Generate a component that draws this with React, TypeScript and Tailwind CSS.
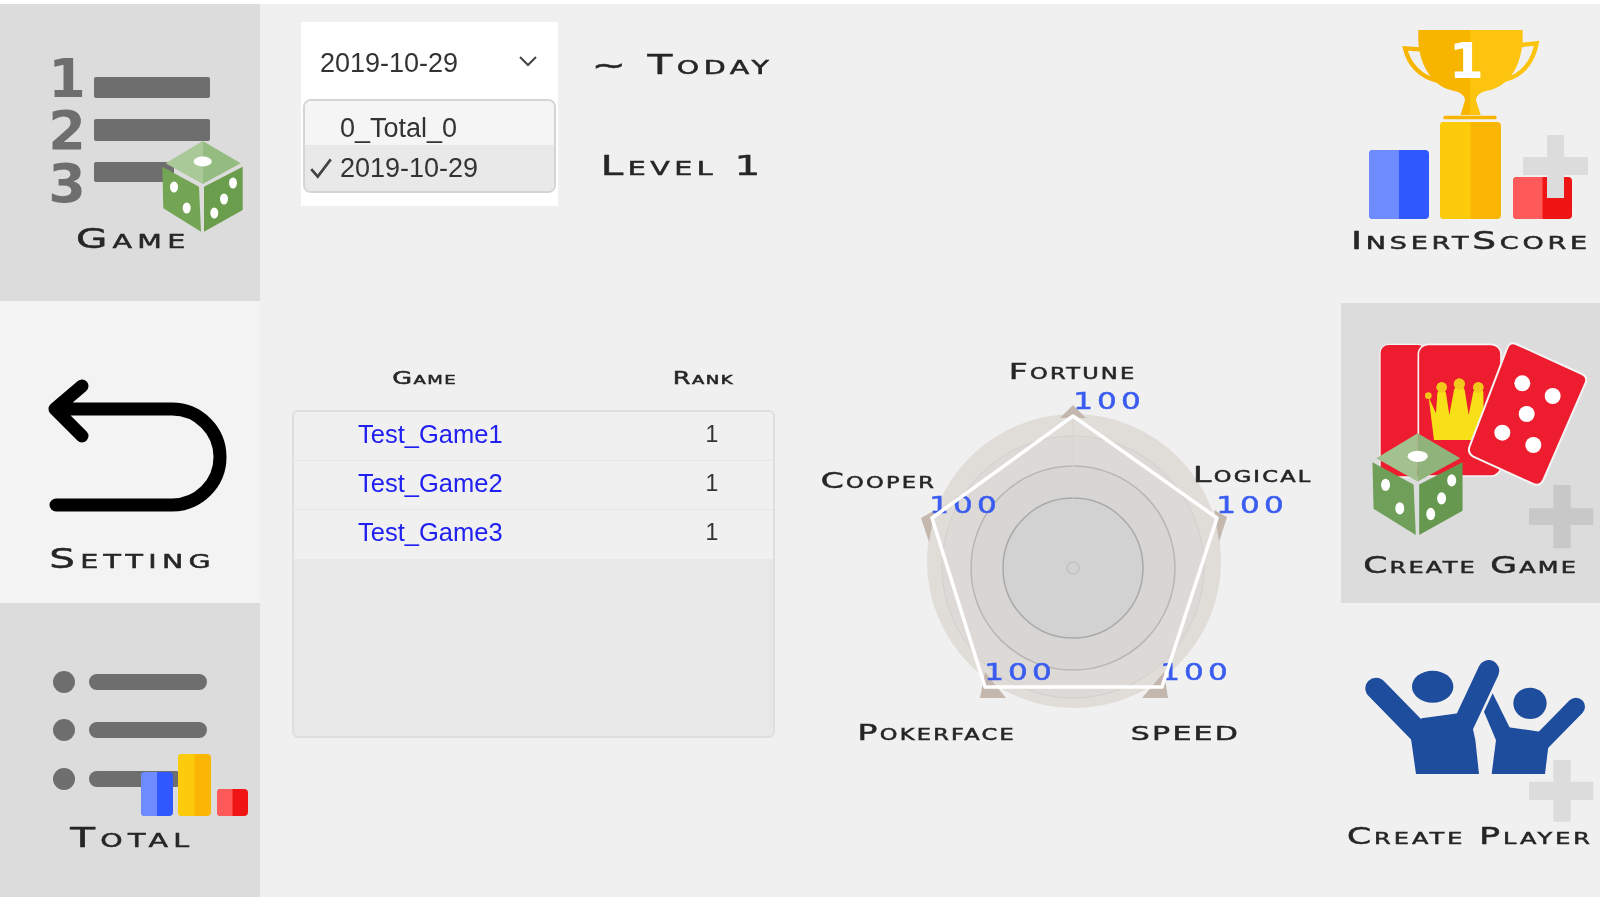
import type { ReactNode } from 'react';

const games = ['Test_Game1', 'Test_Game2', 'Test_Game3'];

// Wide small-caps caption used all over the page
function Caption({ children, className = '' }: { children: ReactNode; className?: string }) {
  return (
    <span
      className={`inline-block whitespace-pre origin-center scale-x-150 font-['DejaVu_Sans',sans-serif] [font-variant-caps:small-caps] leading-none text-[#262626] [-webkit-text-stroke:0.5px_#262626] ${className}`}
    >
      {children}
    </span>
  );
}

function Dice({ x, y, w, h, left = '#74a555', right = '#6a9e4d', topA = '#a9c998', topB = '#95bc80' }: {
  x: number; y: number; w: number; h: number; left?: string; right?: string; topA?: string; topB?: string;
}) {
  return (
    <svg x={x} y={y} width={w} height={h} viewBox="0 0 81 91">
      <path d="M40.7 0 3.7 22.3 40.7 43Z" fill={topA} />
      <path d="M40.7 0 78.7 22.3 40.7 43Z" fill={topB} />
      <path d="M.3 25.7 37 45.7 39 90.7 1.3 67.3Z" fill={left} />
      <path d="M42 45.7 80.7 25.7V69L42 90.7Z" fill={right} />
      <ellipse cx="40.7" cy="20.5" rx="9" ry="5" fill="#fff" />
      <ellipse cx="12" cy="46" rx="4" ry="5.5" fill="#fff" />
      <ellipse cx="24.7" cy="67" rx="4" ry="5.5" fill="#fff" />
      <ellipse cx="71" cy="42" rx="4" ry="5.5" fill="#fff" />
      <ellipse cx="62" cy="58" rx="4" ry="5.5" fill="#fff" />
      <ellipse cx="52.3" cy="72" rx="4" ry="5.5" fill="#fff" />
    </svg>
  );
}

function Bar({ x, y, w, h, a, b }: { x: number; y: number; w: number; h: number; a: string; b: string }) {
  return (
    <g>
      <rect x={x} y={y} width={w} height={h} rx="4" fill={b} />
      <path d={`M${x + 4} ${y}H${x + w / 2}V${y + h}H${x + 4}a4 4 0 0 1-4-4V${y + 4}a4 4 0 0 1 4-4Z`} fill={a} />
    </g>
  );
}

function Plus({ x, y, color }: { x: number; y: number; color: string }) {
  return (
    <path
      d={`M${x + 24} ${y}h17v22h24v18h-24v23h-17v-23h-24v-18h24Z`}
      fill={color}
    />
  );
}

function GameIcon() {
  return (
    <svg viewBox="0 4 260 221" className="block w-[260px] h-[221px] overflow-visible">
      <g fill="#6e6e6e" fontFamily="DejaVu Sans" fontWeight="700" fontSize="54" textAnchor="middle">
        <text x="67" y="97">1</text>
        <text x="67" y="149">2</text>
        <text x="67" y="202">3</text>
      </g>
      <rect x="94" y="77" width="116" height="21" rx="2" fill="#6e6e6e" />
      <rect x="94" y="119" width="116" height="22" rx="2" fill="#6e6e6e" />
      <rect x="94" y="162" width="80" height="20" rx="2" fill="#6e6e6e" />
      <Dice x={162} y={141} w={81} h={91} />
    </svg>
  );
}

function BackIcon() {
  return (
    <svg viewBox="0 301 260 244" className="block w-[260px] h-[244px]">
      <path
        d="M82 386 55 409 82 436M55 409H172A48 48 0 0 1 172 505H56"
        fill="none"
        stroke="#000"
        strokeWidth="13"
        strokeLinecap="round"
        strokeLinejoin="round"
      />
    </svg>
  );
}

function TotalIcon() {
  return (
    <svg viewBox="0 603 260 221" className="block w-[260px] h-[221px] overflow-visible">
      {[682, 730, 779].map((cy) => (
        <circle key={cy} cx="64" cy={cy} r="11" fill="#6e6e6e" />
      ))}
      <rect x="89" y="674" width="118" height="16" rx="8" fill="#6e6e6e" />
      <rect x="89" y="722" width="118" height="16" rx="8" fill="#6e6e6e" />
      <rect x="89" y="771" width="95" height="16" rx="8" fill="#6e6e6e" />
      <Bar x={141} y={772} w={32} h={44} a="#6e8cff" b="#2f58ff" />
      <Bar x={178} y={754} w={33} h={62} a="#fccb0c" b="#fab505" />
      <Bar x={217} y={789} w={31} h={27} a="#ff5a5a" b="#f01515" />
    </svg>
  );
}

function ScoreIcon() {
  return (
    <svg viewBox="1341 4 259 224" className="block w-[259px] h-[224px]">
      <g transform="translate(1330 0) scale(.33333)">
        <path d="M270 148 225 145C235 190 270 235 330 243" fill="none" stroke="#f7b500" strokeWidth="13" />
        <path d="M572 135 620 130C610 180 580 230 520 240" fill="none" stroke="#fcc40e" strokeWidth="13" />
        <path d="M265 90H420V345H392L405 300Q405 280 370 272C310 260 270 200 265 125Z" fill="#f7b500" />
        <path d="M578 90H420V345H452L438 300Q438 280 470 272C520 265 570 220 578 125Z" fill="#fcc40e" />
        <rect x="340" y="347" width="160" height="11" rx="5" fill="#f7b500" />
        <text x="409" y="235" fill="#fff" fontFamily="DejaVu Sans" fontWeight="700" fontSize="150" textAnchor="middle">1</text>
      </g>
      <Bar x={1369} y={150} w={60} h={69} a="#6e8cff" b="#2f58ff" />
      <Bar x={1440} y={122} w={61} h={97} a="#fccb0c" b="#fab505" />
      <Bar x={1513} y={177} w={59} h={42} a="#ff5a5a" b="#f01515" />
      <Plus x={1523} y={135} color="#dcdcdc" />
    </svg>
  );
}

function CreateGameIcon() {
  return (
    <svg viewBox="1341 303 259 251" className="block w-[259px] h-[251px]">
      <g transform="translate(1330 300) scale(.33333)">
        <rect x="150" y="133" width="140" height="398" rx="26" fill="#ed1c2e" stroke="#f4f4f4" strokeWidth="4" />
        <rect x="265" y="133" width="248" height="395" rx="30" fill="#ed1c2e" stroke="#f4f4f4" strokeWidth="5" />
        <path d="M312 420 296 292 318 340 322 280Q335 250 348 280L358 345 372 270Q388 235 404 270L416 345 430 275Q445 250 460 275L462 420Z" fill="#f7e017" />
        <circle cx="335" cy="262" r="16" fill="#f2c81c" />
        <circle cx="388" cy="252" r="17" fill="#f2c81c" />
        <circle cx="445" cy="262" r="16" fill="#f2c81c" />
        <circle cx="295" cy="287" r="10" fill="#f2c81c" />
        <path d="M558 132 756 222Q775 232 766 250L640 540Q630 560 610 552L430 470Q410 458 420 436L530 148Q538 124 558 132Z" fill="#ed1c2e" stroke="#f4f4f4" strokeWidth="6" />
        {[[577, 250], [668, 288], [590, 342], [517, 398], [610, 435]].map(([cx, cy]) => (
          <circle key={cx} cx={cx} cy={cy} r="24" fill="#fff" />
        ))}
        <Dice x={125} y={400} w={275} h={306} left="#6f9f59" right="#66984f" topA="#a3c08f" topB="#90b27b" />
        <path d="M670 555h52v70h68v50h-68v70h-52v-70h-73v-50h73Z" fill="#c8c8c8" />
      </g>
    </svg>
  );
}

function CreatePlayerIcon() {
  return (
    <svg viewBox="1341 603 259 222" className="block w-[259px] h-[222px]">
      <g transform="translate(1330 600) scale(.33333)">
        <g fill="#1e4d9e">
          <ellipse cx="308" cy="260" rx="62" ry="48" />
          <path d="M240 400 275 355 385 340 425 370 436 420 447 522H258L245 430Z" />
          <ellipse cx="600" cy="310" rx="50" ry="47" />
          <path d="M525 380 630 395 655 440 645 522H485L498 420Z" />
          <path d="M488 280 540 385 500 425 462 335Z" />
        </g>
        <g fill="none" stroke="#1e4d9e" strokeWidth="64" strokeLinecap="round">
          <path d="M138 265 275 405" />
          <path d="M476 212 395 385" />
        </g>
        <path d="M738 320 635 425" fill="none" stroke="#1e4d9e" strokeWidth="54" strokeLinecap="round" />
        <path d="M670 480h52v65h68v55h-68v65h-52v-65h-73v-55h73Z" fill="#dcdcdc" />
      </g>
    </svg>
  );
}

function Radar() {
  const labels = [
    { text: '100', x: 1109, y: 409 },
    { text: '100', x: 1252, y: 513 },
    { text: '100', x: 965, y: 513 },
    { text: '100', x: 1020, y: 680 },
    { text: '100', x: 1196, y: 680 },
  ];
  return (
    <div className="relative w-[505px] h-[400px] ml-[40px] shrink-0">
      <svg viewBox="815 360 505 400" className="absolute inset-0 w-full h-full">
        <circle cx="1074" cy="561" r="147" fill="#e0dcd8" />
        <circle cx="1073" cy="567" r="131" fill="#dcd9d6" stroke="#d2cfcc" />
        <circle cx="1073" cy="568" r="102" fill="#d8d6d4" stroke="#b8b6b3" strokeWidth="1.5" />
        <circle cx="1073" cy="568" r="70" fill="#d2d2d2" stroke="#aaa9a7" strokeWidth="1.5" />
        <circle cx="1073" cy="568" r="6" fill="none" stroke="#c2c2c2" strokeWidth="1.5" />
        <path d="M1073 416V498" stroke="#d6d4d1" />
        <g fill="#c4b8ae">
          <path d="M1073 405 1060 418H1086Z" />
          <path d="M1227 517 1214 510 1219 542Z" />
          <path d="M921 518 935 510 929 542Z" />
          <path d="M1168 698 1142 698 1164 672Z" />
          <path d="M980 698 1006 698 985 672Z" />
        </g>
        <g fill="#3a5cf0" stroke="#3a5cf0" strokeWidth=".5" fontFamily="DejaVu Sans" fontSize="23" textAnchor="middle" letterSpacing="3">
          {labels.map((l) => (
            <text key={l.x} transform={`translate(${l.x} ${l.y}) scale(1.35 1)`}>{l.text}</text>
          ))}
        </g>
        <path d="M1073 416 1217 518 1162 687H985L932 518Z" fill="none" stroke="#fff" strokeWidth="3.5" strokeLinejoin="round" />
      </svg>
      <Caption className="absolute left-[215px] top-[1px] text-[22px] tracking-[1.5px]">Fortune</Caption>
      <Caption className="absolute left-[398px] top-[104px] text-[22px] tracking-[1.5px]">Logical</Caption>
      <Caption className="absolute left-[25px] top-[110px] text-[22px] tracking-[1.5px]">Cooper</Caption>
      <Caption className="absolute left-[69px] top-[362px] text-[22px] tracking-[1.5px]">Pokerface</Caption>
      <Caption className="absolute left-[334px] top-[363px] text-[20px] tracking-[1.5px] uppercase">Speed</Caption>
    </div>
  );
}

function GameTable() {
  return (
    <div className="w-[483px] shrink-0 pt-[6px]">
      <div className="flex h-[24px] items-center">
        <div className="w-[266px] shrink-0 text-center">
          <Caption className="text-[17px] tracking-[1px]">Game</Caption>
        </div>
        <div className="w-[290px] shrink-0 text-center">
          <Caption className="text-[17px] tracking-[1px]">Rank</Caption>
        </div>
      </div>
      <div className="mt-[20px] h-[328px] overflow-hidden rounded-md border-2 border-[#dedede] bg-[#e8e8e8]">
        {games.map((name) => (
          <div key={name} className="flex h-[49px] items-center border-b border-[#e6e6e6] bg-[#f0f0f0] pb-[4px] pl-[64px] last:border-b-0">
            <span className="w-[330px] font-['Liberation_Sans',sans-serif] text-[25.5px] text-[#2020f0]">{name}</span>
            <span className="w-[48px] text-center font-['Liberation_Sans',sans-serif] text-[23px] text-[#333]">1</span>
          </div>
        ))}
      </div>
    </div>
  );
}

function DatePicker() {
  return (
    <div className="flex h-[184px] w-[257px] flex-col bg-white font-['Liberation_Sans',sans-serif] text-[27px] text-[#333]">
      <div className="flex h-[77px] shrink-0 items-center justify-between pl-[19px] pr-[18px]">
        <span className="pt-[5px]">2019-10-29</span>
        <svg viewBox="0 0 24 24" className="h-[24px] w-[24px]" fill="none" stroke="#444" strokeWidth="2">
          <path d="M4 8l8 8 8-8" />
        </svg>
      </div>
      <div className="mx-[2px] h-[94px] overflow-hidden rounded-lg border-2 border-[#d4d4d4]">
        <div className="flex h-[44px] items-center bg-[#f5f5f5] pl-[35px] pt-[10px]">0_Total_0</div>
        <div className="relative flex h-[46px] items-center bg-[#e9e9e9] pl-[35px]">
          <svg viewBox="0 0 24 24" className="absolute left-[3px] h-[26px] w-[26px]" fill="none" stroke="#444" strokeWidth="2.5">
            <path d="M3 13l6 7L21 4" />
          </svg>
          2019-10-29
        </div>
      </div>
    </div>
  );
}

export default function App() {
  return (
    <div className="flex h-screen w-full flex-col bg-white blur-[0.6px]">
      <div className="h-[4px] shrink-0" />
      <div className="flex h-[893px] bg-[#f0f0f0]">
        {/* Left menu */}
        <div className="flex w-[260px] shrink-0 flex-col">
          <button className="h-[297px] bg-[#dcdcdc] text-center">
            <div className="h-full">
              <GameIcon />
              <Caption className="ml-[6px] text-[27px] tracking-[3.5px]">Game</Caption>
            </div>
          </button>
          <button className="h-[302px] bg-[#f3f3f3] text-center">
            <div className="h-full">
              <BackIcon />
              <Caption className="ml-[6px] text-[27px] tracking-[3.5px]">Setting</Caption>
            </div>
          </button>
          <button className="h-[294px] bg-[#dcdcdc] text-center">
            <div className="h-full">
              <TotalIcon />
              <Caption className="ml-[4px] text-[27px] tracking-[3.5px]">Total</Caption>
            </div>
          </button>
        </div>

        {/* Center */}
        <div className="flex min-w-0 flex-1 flex-col">
          <div className="flex h-[202px] shrink-0 pl-[41px] pt-[18px]">
            <DatePicker />
            <div className="ml-[38px] flex flex-col">
              <div className="mt-[29px] h-[28px] w-[174px] text-center">
                <Caption className="text-[27px] tracking-[3px]">~ Today</Caption>
              </div>
              <div className="mt-[73px] h-[28px] w-[174px] text-center">
                <Caption className="text-[27px] tracking-[3px]">Level 1</Caption>
              </div>
            </div>
          </div>
          <div className="mt-[154px] flex pl-[32px]">
            <GameTable />
            <Radar />
          </div>
        </div>

        {/* Right menu */}
        <div className="flex w-[259px] shrink-0 flex-col">
          <button className="h-[299px] text-center">
            <div className="h-full">
              <ScoreIcon />
              <Caption className="text-[25px] tracking-[2.5px]">InsertScore</Caption>
            </div>
          </button>
          <button className="h-[300px] bg-[#dcdcdc] text-center">
            <div className="h-full">
              <CreateGameIcon />
              <Caption className="text-[23px] tracking-[1.5px]">Create Game</Caption>
            </div>
          </button>
          <button className="h-[294px] text-center">
            <div className="h-full">
              <CreatePlayerIcon />
              <Caption className="text-[23px] tracking-[2px]">Create Player</Caption>
            </div>
          </button>
        </div>
      </div>
      <div className="flex-1" />
    </div>
  );
}
